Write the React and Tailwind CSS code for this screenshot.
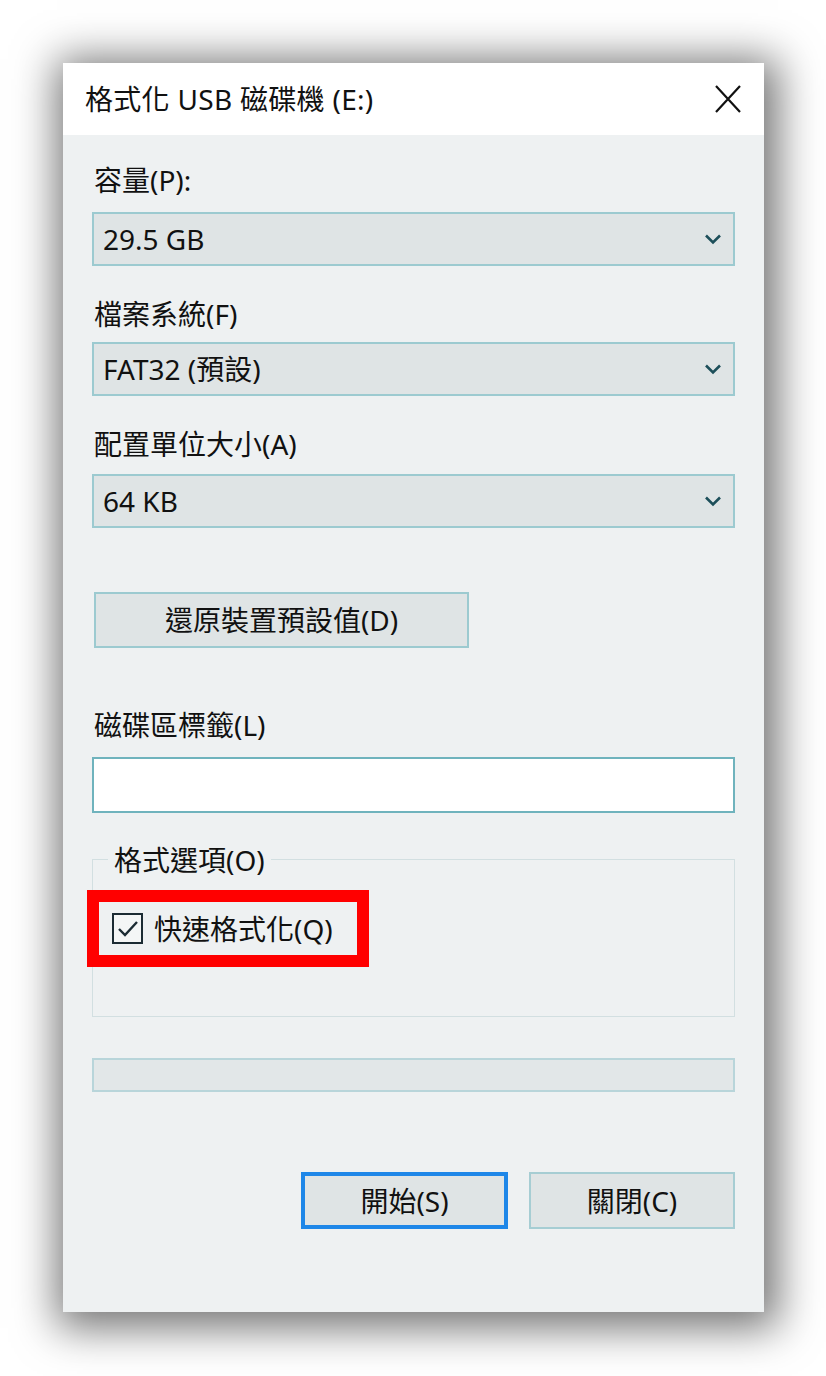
import React from "react";

const font = {
  fontFamily: "'Noto Sans', 'Noto Sans CJK TC', sans-serif",
};

function Chevron() {
  return (
    <svg width="20" height="12" viewBox="0 0 20 12" className="shrink-0">
      <path d="M3 2.5 L10 9.5 L17 2.5" fill="none" stroke="#1d4f5a" strokeWidth="2.6" />
    </svg>
  );
}

function Select({ value }) {
  return (
    <div className="flex h-[54px] items-center justify-between border-2 border-[#9ccad0] bg-[#dfe4e5] pl-[9px] pr-[10px]">
      <span className="text-[28px] leading-[32px] text-[#111]">{value}</span>
      <Chevron />
    </div>
  );
}

function Label({ children, className = "" }) {
  return <div className={`text-[28px] leading-[32px] text-[#111] ${className}`}>{children}</div>;
}

export default function App() {
  return (
    <div className="w-[826px] h-[1376px] bg-white pl-[63px] pt-[63px]" style={font}>
      <div className="flex h-[1249px] w-[701px] flex-col bg-[#eef1f2] shadow-[4px_6px_40px_10px_rgba(0,0,0,0.55)]">
        {/* title bar */}
        <div className="flex h-[72px] items-center justify-between bg-white pl-[22px] pr-[23px]">
          <span className="text-[28px] leading-[32px] tracking-[0.3px] text-[#111]">格式化 USB 磁碟機 (E:)</span>
          <svg width="26" height="28" viewBox="0 0 26 28">
            <path d="M1 1 L25 27 M25 1 L1 27" stroke="#111" strokeWidth="2.2" fill="none" />
          </svg>
        </div>

        {/* body */}
        <div className="flex flex-col pl-[29px] pr-[29px]">
          <Label className="mt-[29px] pl-[2px]">容量(P):</Label>
          <div className="mt-[16px]">
            <Select value="29.5 GB" />
          </div>

          <Label className="mt-[32px] pl-[2px]">檔案系統(F)</Label>
          <div className="mt-[12px]">
            <Select value="FAT32 (預設)" />
          </div>

          <Label className="mt-[32px] pl-[2px]">配置單位大小(A)</Label>
          <div className="mt-[14px]">
            <Select value="64 KB" />
          </div>

          <div className="ml-[2px] mt-[64px] flex h-[56px] w-[375px] items-center justify-center border-2 border-[#9ccad0] bg-[#dfe4e5]">
            <span className="text-[28px] leading-[32px] text-[#111]">還原裝置預設值(D)</span>
          </div>

          <Label className="mt-[61px] pl-[2px]">磁碟區標籤(L)</Label>
          <div className="mt-[16px] h-[56px] border-2 border-[#6fb3bd] bg-white" />

          {/* group box */}
          <div className="relative mt-[46px] h-[158px] border border-[#d2dfe1]">
            <div className="absolute left-[15px] top-[-16px] bg-[#eef1f2] px-[6px] text-[28px] leading-[32px] text-[#111]">
              格式選項(O)
            </div>
            <div className="ml-[-6px] mt-[30px] flex h-[77px] w-[282px] items-center border-[12px] border-[#ff0000] pl-[13px]">
              <div className="flex h-[31px] w-[31px] items-center justify-center border-[2.5px] border-[#1b2b33] bg-[#f4f6f6]">
                <svg width="22" height="18" viewBox="0 0 22 18">
                  <path d="M2 9 L8 15 L20 2" fill="none" stroke="#1b2b33" strokeWidth="2.4" />
                </svg>
              </div>
              <span className="ml-[11px] text-[28px] leading-[32px] text-[#111]">快速格式化(Q)</span>
            </div>
          </div>

          {/* progress */}
          <div className="mt-[41px] h-[34px] border-2 border-[#b8d5da] bg-[#e2e7e8]" />

          {/* buttons */}
          <div className="mt-[80px] flex justify-end gap-[21px]">
            <div className="flex h-[57px] w-[207px] items-center justify-center border-[4px] border-[#1e87e8] bg-[#dfe4e5]">
              <span className="text-[28px] leading-[32px] text-[#111]">開始(S)</span>
            </div>
            <div className="flex h-[57px] w-[206px] items-center justify-center border-2 border-[#a6cdd3] bg-[#dfe4e5]">
              <span className="text-[28px] leading-[32px] text-[#111]">關閉(C)</span>
            </div>
          </div>
        </div>
      </div>
    </div>
  );
}
